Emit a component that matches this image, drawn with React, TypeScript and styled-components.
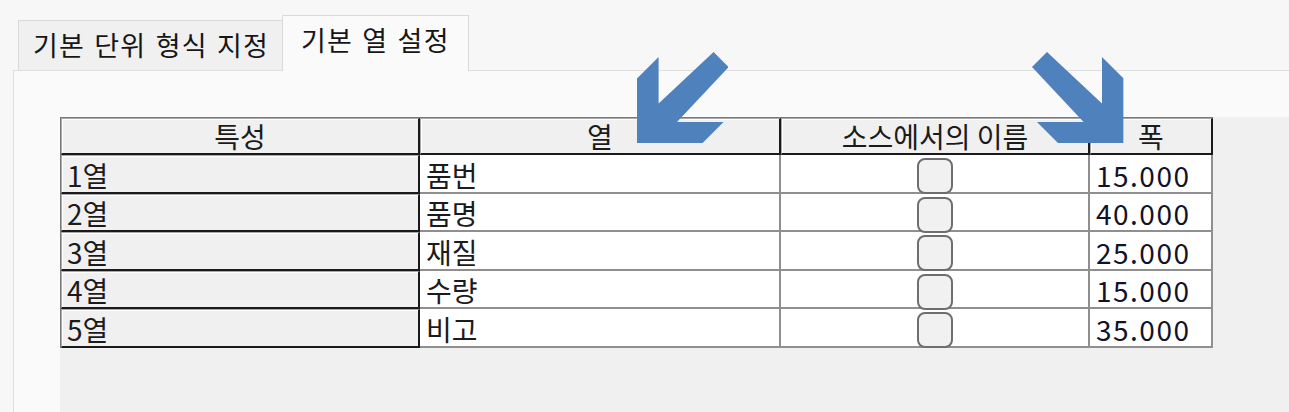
import React from 'react';
import styled, { createGlobalStyle } from 'styled-components';

type ColumnRow = {
	property: string;
	column: string;
	width: string;
};

const rows: ColumnRow[] = [
	{ property: '1열', column: '품번', width: '15.000' },
	{ property: '2열', column: '품명', width: '40.000' },
	{ property: '3열', column: '재질', width: '25.000' },
	{ property: '4열', column: '수량', width: '15.000' },
	{ property: '5열', column: '비고', width: '35.000' },
];

const GlobalStyle = createGlobalStyle`
	html,
	body {
		margin: 0;
		padding: 0;
		background: #f7f7f7;
	}
	body {
		font-family: 'Noto Sans CJK KR', 'Noto Sans', sans-serif;
		color: #1b1b1b;
	}
`;

const Screen = styled.div`
	position: relative;
	display: flex;
	flex-direction: column;
	width: 1289px;
	height: 412px;
	overflow: hidden;
	background: #f7f7f7;
`;

const TabStrip = styled.div`
	display: flex;
	align-items: flex-end;
	height: 70px;
	padding-left: 18px;
	box-sizing: border-box;
`;

const Tab = styled.div<{ $active?: boolean }>`
	position: relative;
	z-index: ${(p) => (p.$active ? 2 : 1)};
	box-sizing: border-box;
	width: ${(p) => (p.$active ? '187px' : '265px')};
	height: ${(p) => (p.$active ? '56px' : '50px')};
	margin-left: ${(p) => (p.$active ? '-1px' : '0')};
	margin-bottom: ${(p) => (p.$active ? '-1px' : '0')};
	padding: ${(p) => (p.$active ? '9px 0 0 18px' : '9px 0 0 14px')};
	border: 1px solid #d9d9d9;
	border-bottom: none;
	background: ${(p) => (p.$active ? '#fafafa' : '#f0f0f0')};
	font-size: 27px;
	line-height: 30px;
	letter-spacing: 1.2px;
	word-spacing: 2px;
	white-space: nowrap;
	color: #161616;
`;

const Panel = styled.div`
	flex: 1;
	display: flex;
	margin-left: 13px;
	padding: 46px 0 0 46px;
	border-top: 1px solid #dedede;
	border-left: 1px solid #dedede;
	background: #fafafa;
`;

const GridArea = styled.div`
	flex: 1;
	display: flex;
	align-items: flex-start;
	background: #f0f0f0;
`;

const Table = styled.div`
	display: grid;
	grid-template-columns: 359px 361px 309px 123px;
	grid-template-rows: 37px repeat(5, 38.5px);
	border-top: 1px solid #7a7a7a;
	border-left: 1px solid #7a7a7a;
	font-size: 28px;
	line-height: 1;
`;

const RaisedCell = styled.div<{ $center?: boolean }>`
	display: flex;
	align-items: flex-end;
	justify-content: ${(p) => (p.$center ? 'center' : 'flex-start')};
	box-sizing: border-box;
	padding: 0 0 3px ${(p) => (p.$center ? '0' : '5px')};
	border-top: 1px solid #a8a8a8;
	border-left: 1px solid #a8a8a8;
	border-right: 2px solid #1a1a1a;
	border-bottom: 2px solid #1a1a1a;
	box-shadow: inset 1px 1px 0 #ffffff;
	background: #f0f0f0;
	white-space: nowrap;
`;

const DataCell = styled.div<{ $center?: boolean }>`
	display: flex;
	align-items: ${(p) => (p.$center ? 'flex-start' : 'flex-end')};
	justify-content: ${(p) => (p.$center ? 'center' : 'flex-start')};
	box-sizing: border-box;
	padding: ${(p) => (p.$center ? '3px 0 0' : '0 0 3px 6px')};
	border-right: 2px solid #8f8f8f;
	border-bottom: 2px solid #8f8f8f;
	background: #ffffff;
	white-space: nowrap;
`;

const NumberText = styled.span`
	color: #121228;
	letter-spacing: 1.5px;
`;

const CheckBox = styled.span`
	position: relative;
	z-index: 1;
	display: block;
	box-sizing: border-box;
	width: 36px;
	height: 36px;
	border: 2px solid #6e6e6e;
	border-radius: 8px;
	background: #f1f1f1;
`;

const ArrowMark = styled.svg<{ $left: number; $flip?: boolean }>`
	position: absolute;
	z-index: 5;
	top: 51.7px;
	left: ${(p) => p.$left}px;
	width: 91.6px;
	height: 91.6px;
	transform: ${(p) => (p.$flip ? 'scaleX(-1)' : 'none')};
`;

const Arrow = ({ left, flip }: { left: number; flip?: boolean }) => (
	<ArrowMark $left={left} $flip={flip} viewBox="0 0 91.6 91.6">
		<polygon
			points="21.6,5 0,26.6 0,91.6 65,91.6 86.6,70 40,70 91.6,15 76.6,0 21.6,51.6"
			fill="#4f81bd"
		/>
	</ArrowMark>
);

const App = () => (
	<Screen>
		<GlobalStyle />
		<TabStrip>
			<Tab>기본 단위 형식 지정</Tab>
			<Tab $active>기본 열 설정</Tab>
		</TabStrip>
		<Panel>
			<GridArea>
				<Table>
					<RaisedCell $center>특성</RaisedCell>
					<RaisedCell $center>열</RaisedCell>
					<RaisedCell $center>소스에서의 이름</RaisedCell>
					<RaisedCell $center>폭</RaisedCell>
					{rows.map((row) => (
						<React.Fragment key={row.property}>
							<RaisedCell>{row.property}</RaisedCell>
							<DataCell>{row.column}</DataCell>
							<DataCell $center>
								<CheckBox />
							</DataCell>
							<DataCell>
								<NumberText>{row.width}</NumberText>
							</DataCell>
						</React.Fragment>
					))}
				</Table>
			</GridArea>
		</Panel>
		<Arrow left={636.7} />
		<Arrow left={1031.7} flip />
	</Screen>
);

export default App;
